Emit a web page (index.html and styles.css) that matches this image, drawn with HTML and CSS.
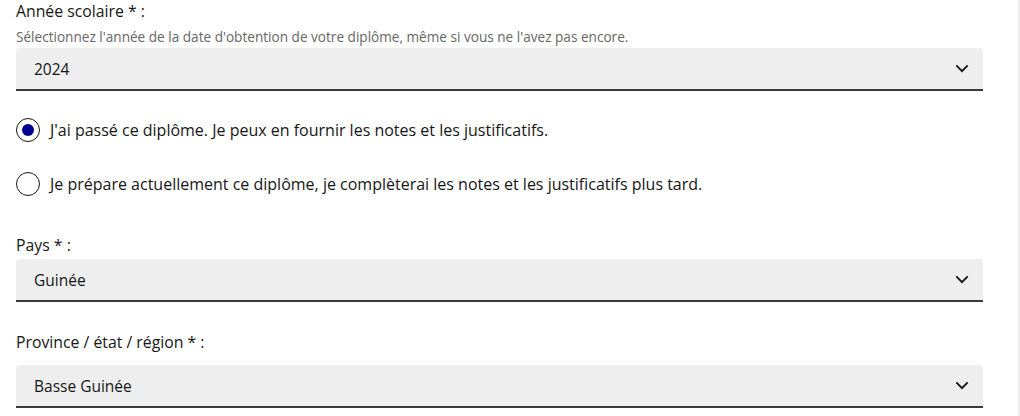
FILE: index.html
```html
<!DOCTYPE html>
<html lang="fr">
<head>
<meta charset="utf-8">
<link rel="stylesheet" href="styles.css">
</head>
<body>
<div class="page">
  <form class="form">
    <div class="field">
      <label class="label">Année scolaire * :</label>
      <span class="hint">Sélectionnez l'année de la date d'obtention de votre diplôme, même si vous ne l'avez pas encore.</span>
      <div class="select"><span>2024</span><svg class="chev" viewBox="0 0 16 10" width="14" height="9"><path d="M1.5 1.5 L8 8 L14.5 1.5" fill="none" stroke="#161616" stroke-width="2.2"/></svg></div>
    </div>
    <div class="radios">
      <div class="radio"><span class="circle checked"></span><span class="rtext">J'ai passé ce diplôme. Je peux en fournir les notes et les justificatifs.</span></div>
      <div class="radio"><span class="circle"></span><span class="rtext">Je prépare actuellement ce diplôme, je complèterai les notes et les justificatifs plus tard.</span></div>
    </div>
    <div class="field field-pays">
      <label class="label">Pays * :</label>
      <div class="select"><span>Guinée</span><svg class="chev" viewBox="0 0 16 10" width="14" height="9"><path d="M1.5 1.5 L8 8 L14.5 1.5" fill="none" stroke="#161616" stroke-width="2.2"/></svg></div>
    </div>
    <div class="field field-prov">
      <label class="label">Province / état / région * :</label>
      <div class="select"><span>Basse Guinée</span><svg class="chev" viewBox="0 0 16 10" width="14" height="9"><path d="M1.5 1.5 L8 8 L14.5 1.5" fill="none" stroke="#161616" stroke-width="2.2"/></svg></div>
    </div>
  </form>
  <div class="track"></div>
</div>
</body>
</html>
```
FILE: styles.css
```css
html, body { margin: 0; padding: 0; background: #fff; }
body { font-family: "Open Sans", "Liberation Sans", sans-serif; color: #161616; }
.page { display: flex; width: 1020px; height: 416px; overflow: hidden; }
.form { flex: 1; padding: 0 35px 0 16px; display: flex; flex-direction: column; }
.track { width: 2px; background: #efefef; }
.field { display: flex; flex-direction: column; }
.label { font-size: 15.8px; line-height: 22px; color: #161616; }
.hint { font-size: 13.6px; line-height: 16px; color: #666; margin-top: 7px; }
.select { margin-top: 3px; height: 41px; background: #eeeeee; border-radius: 4px 4px 0 0; border-bottom: 2px solid #3a3a3a; display: flex; align-items: center; justify-content: space-between; padding: 0 14px 0 18px; font-size: 15.5px; color: #161616; }
.chev { display: block; }
.radios { display: flex; flex-direction: column; gap: 30px; margin-top: 27px; }
.radio { display: flex; align-items: center; gap: 10px; height: 24px; font-size: 16px; }
.circle { width: 24px; height: 24px; border: 1px solid #161616; border-radius: 50%; box-sizing: border-box; position: relative; flex: none; }
.circle.checked::after { content: ""; position: absolute; left: 5px; top: 5px; width: 12px; height: 12px; border-radius: 50%; background: #000091; }
.rtext { line-height: 24px; }
.field-pays { margin-top: 38px; }
.field-prov { margin-top: 29px; }
.field-prov .select { margin-top: 12px; }
```
